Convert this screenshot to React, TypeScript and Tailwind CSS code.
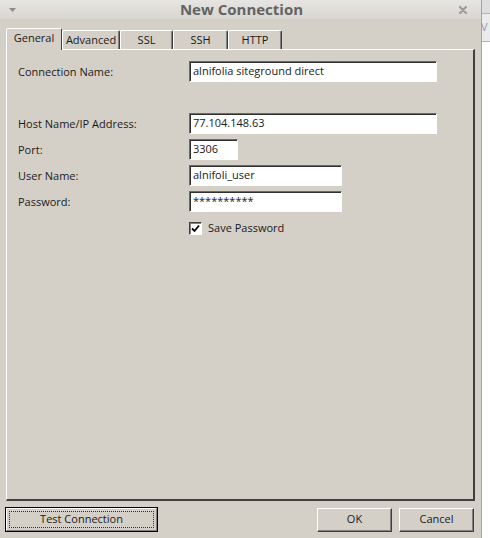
const tabs = [
  { label: "General", w: "w-[56px]", active: true },
  { label: "Advanced", w: "w-[58px]", active: false },
  { label: "SSL", w: "w-[53px]", active: false },
  { label: "SSH", w: "w-[55px]", active: false },
  { label: "HTTP", w: "w-[54px]", active: false },
];

const Field = ({ label, value, width }: { label: string; value: string; width: string }) => (
  <div className="flex items-center h-[21px]">
    <div className="w-[171px] text-[#1a1a1a] pt-px">{label}</div>
    <div
      className={`${width} h-[21px] bg-white border-t border-l border-[#6a6a6a] border-b border-r border-b-white border-r-white shadow-[inset_1px_1px_0_#303030] flex items-center pl-[3px] text-[#1a1a1a]`}
    >
      {value}
    </div>
  </div>
);

const Button = ({ label, width }: { label: string; width: string }) => (
  <div
    className={`${width} h-[24px] flex items-center justify-center border-t border-l border-white border-b border-r border-b-[#404040] border-r-[#404040] shadow-[inset_-1px_-1px_0_#808080] text-[#1a1a1a]`}
  >
    {label}
  </div>
);

export default function App() {
  return (
    <div className="w-[490px] h-[538px] flex overflow-hidden bg-white font-['Open_Sans','Liberation_Sans',sans-serif] text-[11px]">
      <div className="w-[481px] h-full flex flex-col bg-[#d4d0c8]">
        {/* title bar */}
        <div className="h-[19px] flex items-center justify-between px-[8px] bg-gradient-to-b from-[#e6e5e2] to-[#d9d6d0]">
          <svg width="9" height="6" viewBox="0 0 9 6">
            <path d="M1 1 L8 1 L4.5 5 Z" fill="#8c8c8c" />
          </svg>
          <div className="text-[15px] font-bold text-[#636363] leading-none ml-[8px] -mt-px">New Connection</div>
          <svg width="10" height="10" viewBox="0 0 10 10" className="mr-[5px]">
            <path d="M2 2 L8 8 M8 2 L2 8" stroke="#9a9a9a" strokeWidth="2.2" strokeLinecap="round" />
          </svg>
        </div>

        <div className="flex-1 flex flex-col px-[6px] pt-[9px]">
          {/* tabs */}
          <div className="flex items-end h-[21px] relative z-10">
            {tabs.map((t) => (
              <div
                key={t.label}
                className={`${t.w} flex items-center justify-center rounded-t-[2px] border-t border-l border-white border-r border-r-[#404040] text-[#1a1a1a] ${
                  t.active ? "h-[22px] -mb-px bg-[#d4d0c8] pb-[2px]" : "h-[19px] shadow-[inset_-1px_0_0_#808080]"
                }`}
              >
                {t.label}
              </div>
            ))}
          </div>

          {/* panel */}
          <div className="h-[452px] flex flex-col border-t border-l border-white border-b-2 border-r-2 border-b-[#404040] border-r-[#404040] pl-[11px] pt-[11px] gap-[5px]">
            <Field label="Connection Name:" value="alnifolia siteground direct" width="w-[248px]" />
            <div className="h-[21px]" />
            <Field label="Host Name/IP Address:" value="77.104.148.63" width="w-[248px]" />
            <Field label="Port:" value="3306" width="w-[49px]" />
            <Field label="User Name:" value="alnifoli_user" width="w-[153px]" />
            <Field label="Password:" value="**********" width="w-[153px]" />
            <div className="flex items-center pl-[171px] mt-[4px] h-[14px]">
              <div className="w-[13px] h-[13px] bg-white border-t border-l border-[#404040] border-b border-r border-b-white border-r-white shadow-[inset_1px_1px_0_#808080] flex items-center justify-center">
                <svg width="9" height="9" viewBox="0 0 9 9">
                  <path d="M1 4.5 L3.5 7 L8 1.5" stroke="#000" strokeWidth="1.8" fill="none" />
                </svg>
              </div>
              <span className="ml-[6px] text-[#1a1a1a]">Save Password</span>
            </div>
          </div>

          {/* buttons */}
          <div className="flex items-center mt-[6px] -ml-px">
            <div className="w-[153px] h-[25px] border border-black flex">
              <div className="flex-1 flex border-t border-l border-white border-b border-r border-b-[#808080] border-r-[#808080] p-[2px]">
                <div className="flex-1 border border-dotted border-[#333] flex items-center justify-center text-[#1a1a1a]">
                  Test Connection
                </div>
              </div>
            </div>
            <div className="flex-1" />
            <Button label="OK" width="w-[75px]" />
            <div className="w-[7px]" />
            <Button label="Cancel" width="w-[75px]" />
            <div className="w-px" />
          </div>
        </div>
      </div>

      <div className="w-px h-full bg-[#a4a4a4]" />
      <div className="flex-1 flex flex-col overflow-hidden">
        <div className="h-[14px] bg-[#dedede] border-b border-[#b4b4b4]" />
        <div className="h-[28px] bg-[#ebebeb] border-b border-[#b4b4b4] flex items-center overflow-hidden">
          <span className="text-[11px] text-[#8a9cb0] -ml-[1px]">V</span>
        </div>
        <div className="flex-1 bg-white" />
      </div>
    </div>
  );
}
